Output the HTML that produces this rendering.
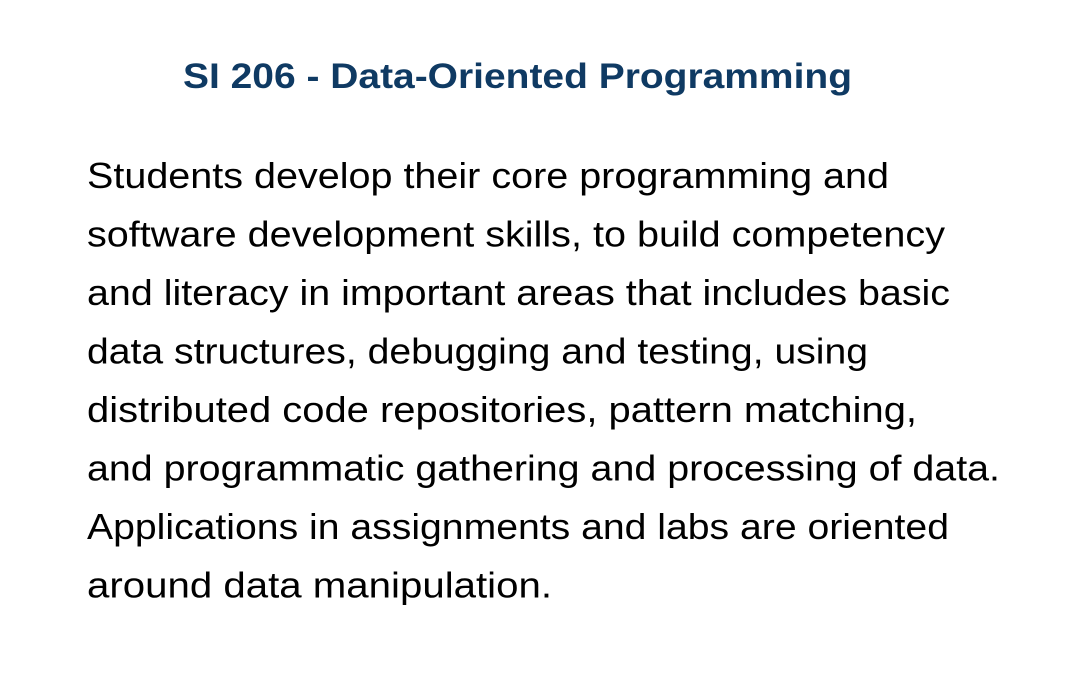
<!DOCTYPE html>
<html><head><meta charset="utf-8"><style>
html,body{margin:0;padding:0;background:#fff;width:1070px;height:678px;overflow:hidden}
svg{display:block}
text{font-family:"Liberation Sans",sans-serif}
</style></head><body>
<svg width="1070" height="678" xmlns="http://www.w3.org/2000/svg">
<text x="183" y="88" font-size="35" font-weight="bold" fill="#0f3a63" textLength="669" lengthAdjust="spacingAndGlyphs">SI 206 - Data-Oriented Programming</text>
<g font-size="36" fill="#000">
<text x="87" y="188" textLength="802" lengthAdjust="spacingAndGlyphs">Students develop their core programming and</text>
<text x="87" y="246.5" textLength="858" lengthAdjust="spacingAndGlyphs">software development skills, to build competency</text>
<text x="87" y="305" textLength="863" lengthAdjust="spacingAndGlyphs">and literacy in important areas that includes basic</text>
<text x="87" y="363.5" textLength="781" lengthAdjust="spacingAndGlyphs">data structures, debugging and testing, using</text>
<text x="87" y="422" textLength="830" lengthAdjust="spacingAndGlyphs">distributed code repositories, pattern matching,</text>
<text x="87" y="480.5" textLength="913" lengthAdjust="spacingAndGlyphs">and programmatic gathering and processing of data.</text>
<text x="87" y="539" textLength="862" lengthAdjust="spacingAndGlyphs">Applications in assignments and labs are oriented</text>
<text x="87" y="597.5" textLength="465" lengthAdjust="spacingAndGlyphs">around data manipulation.</text>
</g>
</svg>
</body></html>
